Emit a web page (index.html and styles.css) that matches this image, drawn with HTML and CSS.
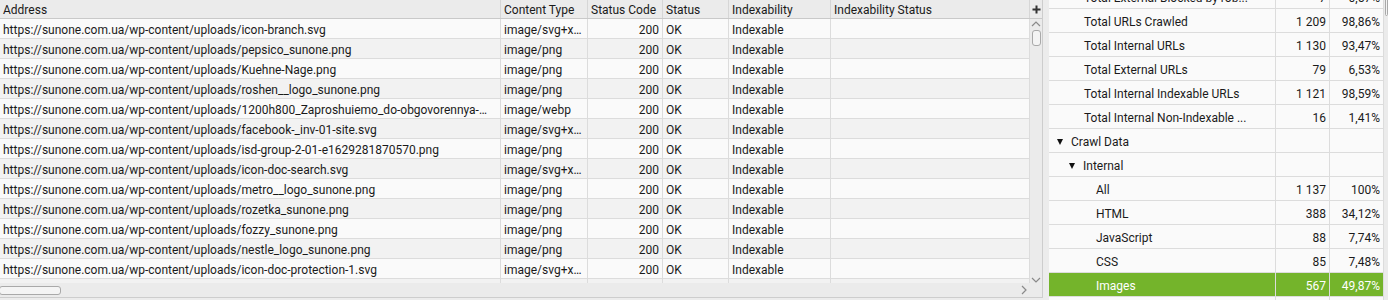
FILE: index.html
```html
<!DOCTYPE html>
<html lang="en">
<head>
  <meta charset="UTF-8" />
  <title>Crawl Overview</title>
  <link rel="stylesheet" href="styles.css">
</head>
<body>
  <div class="app">

    <div class="grid-pane">
      <div class="grid-body">
        <div class="grid-main">
          <div class="row head">
            <div class="cell">Address</div>
            <div class="cell">Content Type</div>
            <div class="cell">Status Code</div>
            <div class="cell">Status</div>
            <div class="cell">Indexability</div>
            <div class="cell">Indexability Status</div>
          </div>
          <div class="row"><div class="cell">https://sunone.com.ua/wp-content/uploads/icon-branch.svg</div><div class="cell">image/svg+xml</div><div class="cell num">200</div><div class="cell">OK</div><div class="cell">Indexable</div><div class="cell"></div></div>
          <div class="row alt"><div class="cell">https://sunone.com.ua/wp-content/uploads/pepsico_sunone.png</div><div class="cell">image/png</div><div class="cell num">200</div><div class="cell">OK</div><div class="cell">Indexable</div><div class="cell"></div></div>
          <div class="row"><div class="cell">https://sunone.com.ua/wp-content/uploads/Kuehne-Nage.png</div><div class="cell">image/png</div><div class="cell num">200</div><div class="cell">OK</div><div class="cell">Indexable</div><div class="cell"></div></div>
          <div class="row alt"><div class="cell">https://sunone.com.ua/wp-content/uploads/roshen__logo_sunone.png</div><div class="cell">image/png</div><div class="cell num">200</div><div class="cell">OK</div><div class="cell">Indexable</div><div class="cell"></div></div>
          <div class="row"><div class="cell">https://sunone.com.ua/wp-content/uploads/1200h800_Zaproshuiemo_do-obgovorennya-proektu.webp</div><div class="cell">image/webp</div><div class="cell num">200</div><div class="cell">OK</div><div class="cell">Indexable</div><div class="cell"></div></div>
          <div class="row alt"><div class="cell">https://sunone.com.ua/wp-content/uploads/facebook-_inv-01-site.svg</div><div class="cell">image/svg+xml</div><div class="cell num">200</div><div class="cell">OK</div><div class="cell">Indexable</div><div class="cell"></div></div>
          <div class="row"><div class="cell">https://sunone.com.ua/wp-content/uploads/isd-group-2-01-e1629281870570.png</div><div class="cell">image/png</div><div class="cell num">200</div><div class="cell">OK</div><div class="cell">Indexable</div><div class="cell"></div></div>
          <div class="row alt"><div class="cell">https://sunone.com.ua/wp-content/uploads/icon-doc-search.svg</div><div class="cell">image/svg+xml</div><div class="cell num">200</div><div class="cell">OK</div><div class="cell">Indexable</div><div class="cell"></div></div>
          <div class="row"><div class="cell">https://sunone.com.ua/wp-content/uploads/metro__logo_sunone.png</div><div class="cell">image/png</div><div class="cell num">200</div><div class="cell">OK</div><div class="cell">Indexable</div><div class="cell"></div></div>
          <div class="row alt"><div class="cell">https://sunone.com.ua/wp-content/uploads/rozetka_sunone.png</div><div class="cell">image/png</div><div class="cell num">200</div><div class="cell">OK</div><div class="cell">Indexable</div><div class="cell"></div></div>
          <div class="row"><div class="cell">https://sunone.com.ua/wp-content/uploads/fozzy_sunone.png</div><div class="cell">image/png</div><div class="cell num">200</div><div class="cell">OK</div><div class="cell">Indexable</div><div class="cell"></div></div>
          <div class="row alt"><div class="cell">https://sunone.com.ua/wp-content/uploads/nestle_logo_sunone.png</div><div class="cell">image/png</div><div class="cell num">200</div><div class="cell">OK</div><div class="cell">Indexable</div><div class="cell"></div></div>
          <div class="row"><div class="cell">https://sunone.com.ua/wp-content/uploads/icon-doc-protection-1.svg</div><div class="cell">image/svg+xml</div><div class="cell num">200</div><div class="cell">OK</div><div class="cell">Indexable</div><div class="cell"></div></div>
          <div class="row alt"><div class="cell"></div><div class="cell"></div><div class="cell"></div><div class="cell"></div><div class="cell"></div><div class="cell"></div></div>
        </div>

        <div class="vscroll">
          <div class="plus">
            <svg width="9" height="9" viewBox="0 0 9 9"><path d="M4.5 0.5v8M0.5 4.5h8" stroke="#333" stroke-width="2"/></svg>
          </div>
          <div class="vtrack">
            <svg class="arrow" width="10" height="6" viewBox="0 0 10 6"><polyline points="1,5 5,1 9,5" fill="none" stroke="#8a8a8a" stroke-width="1.2"/></svg>
            <div class="vthumb"></div>
            <div class="spacer"></div>
            <svg class="arrow" width="10" height="6" viewBox="0 0 10 6"><polyline points="1,1 5,5 9,1" fill="none" stroke="#8a8a8a" stroke-width="1.2"/></svg>
          </div>
        </div>
      </div>

      <div class="hscroll">
        <div class="hthumb"></div>
        <div class="spacer"></div>
        <svg class="arrow" width="6" height="10" viewBox="0 0 6 10"><polyline points="1,1 5,5 1,9" fill="none" stroke="#8a8a8a" stroke-width="1.2"/></svg>
      </div>
    </div>

    <div class="tree-pane">
      <div class="tree">
        <div class="trow"><div class="tcell d1">Total External Blocked by rob...</div><div class="tcell num">7</div><div class="tcell num">0,57%</div></div>
        <div class="trow"><div class="tcell d1">Total URLs Crawled</div><div class="tcell num">1 209</div><div class="tcell num">98,86%</div></div>
        <div class="trow"><div class="tcell d1">Total Internal URLs</div><div class="tcell num">1 130</div><div class="tcell num">93,47%</div></div>
        <div class="trow"><div class="tcell d1">Total External URLs</div><div class="tcell num">79</div><div class="tcell num">6,53%</div></div>
        <div class="trow"><div class="tcell d1">Total Internal Indexable URLs</div><div class="tcell num">1 121</div><div class="tcell num">98,59%</div></div>
        <div class="trow"><div class="tcell d1">Total Internal Non-Indexable ...</div><div class="tcell num">16</div><div class="tcell num">1,41%</div></div>
        <div class="trow"><div class="tcell g0"><span class="caret"></span>Crawl Data</div><div class="tcell"></div><div class="tcell"></div></div>
        <div class="trow"><div class="tcell g1"><span class="caret"></span>Internal</div><div class="tcell"></div><div class="tcell"></div></div>
        <div class="trow"><div class="tcell d2">All</div><div class="tcell num">1 137</div><div class="tcell num">100%</div></div>
        <div class="trow"><div class="tcell d2">HTML</div><div class="tcell num">388</div><div class="tcell num">34,12%</div></div>
        <div class="trow"><div class="tcell d2">JavaScript</div><div class="tcell num">88</div><div class="tcell num">7,74%</div></div>
        <div class="trow"><div class="tcell d2">CSS</div><div class="tcell num">85</div><div class="tcell num">7,48%</div></div>
        <div class="trow selected"><div class="tcell d2">Images</div><div class="tcell num">567</div><div class="tcell num">49,87%</div></div>
        <div class="trow"><div class="tcell d2">Media</div><div class="tcell num">0</div><div class="tcell num">0%</div></div>
      </div>
      <div class="tscroll"><div class="tthumb"></div></div>
    </div>

  </div>
</body>
</html>
```

FILE: styles.css
```css
* {
  box-sizing: border-box;
}

body {
  margin: 0;
  background: #ececec;
  font-family: Roboto, "Liberation Sans", sans-serif;
  font-size: 12px;
  color: #1a1a1a;
}

.app {
  display: flex;
  height: 300px;
  overflow: hidden;
}

/* left grid */
.grid-pane {
  width: 1043px;
  height: 298px;
  display: flex;
  flex-direction: column;
  background: #fafafa;
  border-right: 1px solid #cdcdcd;
  border-bottom: 1px solid #cdcdcd;
}

.grid-body {
  flex: 1;
  display: flex;
  min-height: 0;
}

.grid-main {
  width: 1030px;
  overflow: hidden;
}

.row {
  display: grid;
  grid-template-columns: 501px 87px 75px 66px 102px 199px;
  height: 20px;
  border-bottom: 1px solid #dcdcdc;
}

.row.alt { background: #f2f2f2; }

.row.head {
  height: 19px;
  background: #ebebeb;
  border-bottom-color: #c9c9c9;
}

.cell {
  padding: 2px 3px 0;
  line-height: 19px;
  border-right: 1px solid #dcdcdc;
  white-space: nowrap;
  overflow: hidden;
  text-overflow: ellipsis;
}

.row .cell:first-child { padding-right: 10px; }

.head .cell {
  padding-top: 1px;
  line-height: 18px;
  border-right-color: #d6d6d6;
  text-overflow: clip;
}

.num { text-align: right; }

.vscroll {
  width: 12px;
  display: flex;
  flex-direction: column;
  background: #ebebeb;
}

.plus {
  height: 19px;
  display: flex;
  align-items: center;
  justify-content: center;
  border-bottom: 1px solid #c9c9c9;
}

.vtrack {
  flex: 1;
  display: flex;
  flex-direction: column;
  align-items: center;
  padding: 2px 0 0;
}

.vtrack .arrow { flex-shrink: 0; }

.vthumb {
  width: 9px;
  height: 16px;
  margin-top: 3px;
  border: 1px solid #a9a9a9;
  border-radius: 3px;
  background: #f4f4f4;
}

.spacer { flex: 1; }

.hscroll {
  height: 14px;
  display: flex;
  align-items: center;
  padding-right: 15px;
  background: #ebebeb;
}

.hthumb {
  width: 62px;
  height: 9px;
  margin-left: -1px;
  border: 1px solid #a9a9a9;
  border-radius: 3px;
  background: #f4f4f4;
}

/* right tree */
.tree-pane {
  flex: 1;
  margin-left: 6px;
  display: flex;
  background: #fafafa;
  overflow: hidden;
}

.tree {
  width: 335px;
  margin-top: -15px;
}

.trow {
  display: grid;
  grid-template-columns: 227px 54px 54px;
  height: 24px;
  border-bottom: 1px solid #dcdcdc;
}

.trow.selected {
  background: #74b42b;
  color: #fff;
}

.tcell {
  padding: 3px 3px 0;
  line-height: 20px;
  border-right: 1px solid #dcdcdc;
  white-space: nowrap;
  overflow: hidden;
}

.d1 { padding-left: 35px; }
.d2 { padding-left: 47px; }
.g0 { padding-left: 8px; }
.g1 { padding-left: 20px; }

.caret {
  display: inline-block;
  width: 0;
  height: 0;
  margin-right: 8px;
  vertical-align: 1px;
  border-left: 3.5px solid transparent;
  border-right: 3.5px solid transparent;
  border-top: 6px solid #111;
}

.tscroll {
  flex: 1;
  background: #ebebeb;
  padding-left: 1px;
}

.tthumb {
  height: 18px;
  margin-top: -2px;
  border: 1px solid #a9a9a9;
  border-radius: 3px;
  background: #f4f4f4;
}
```
